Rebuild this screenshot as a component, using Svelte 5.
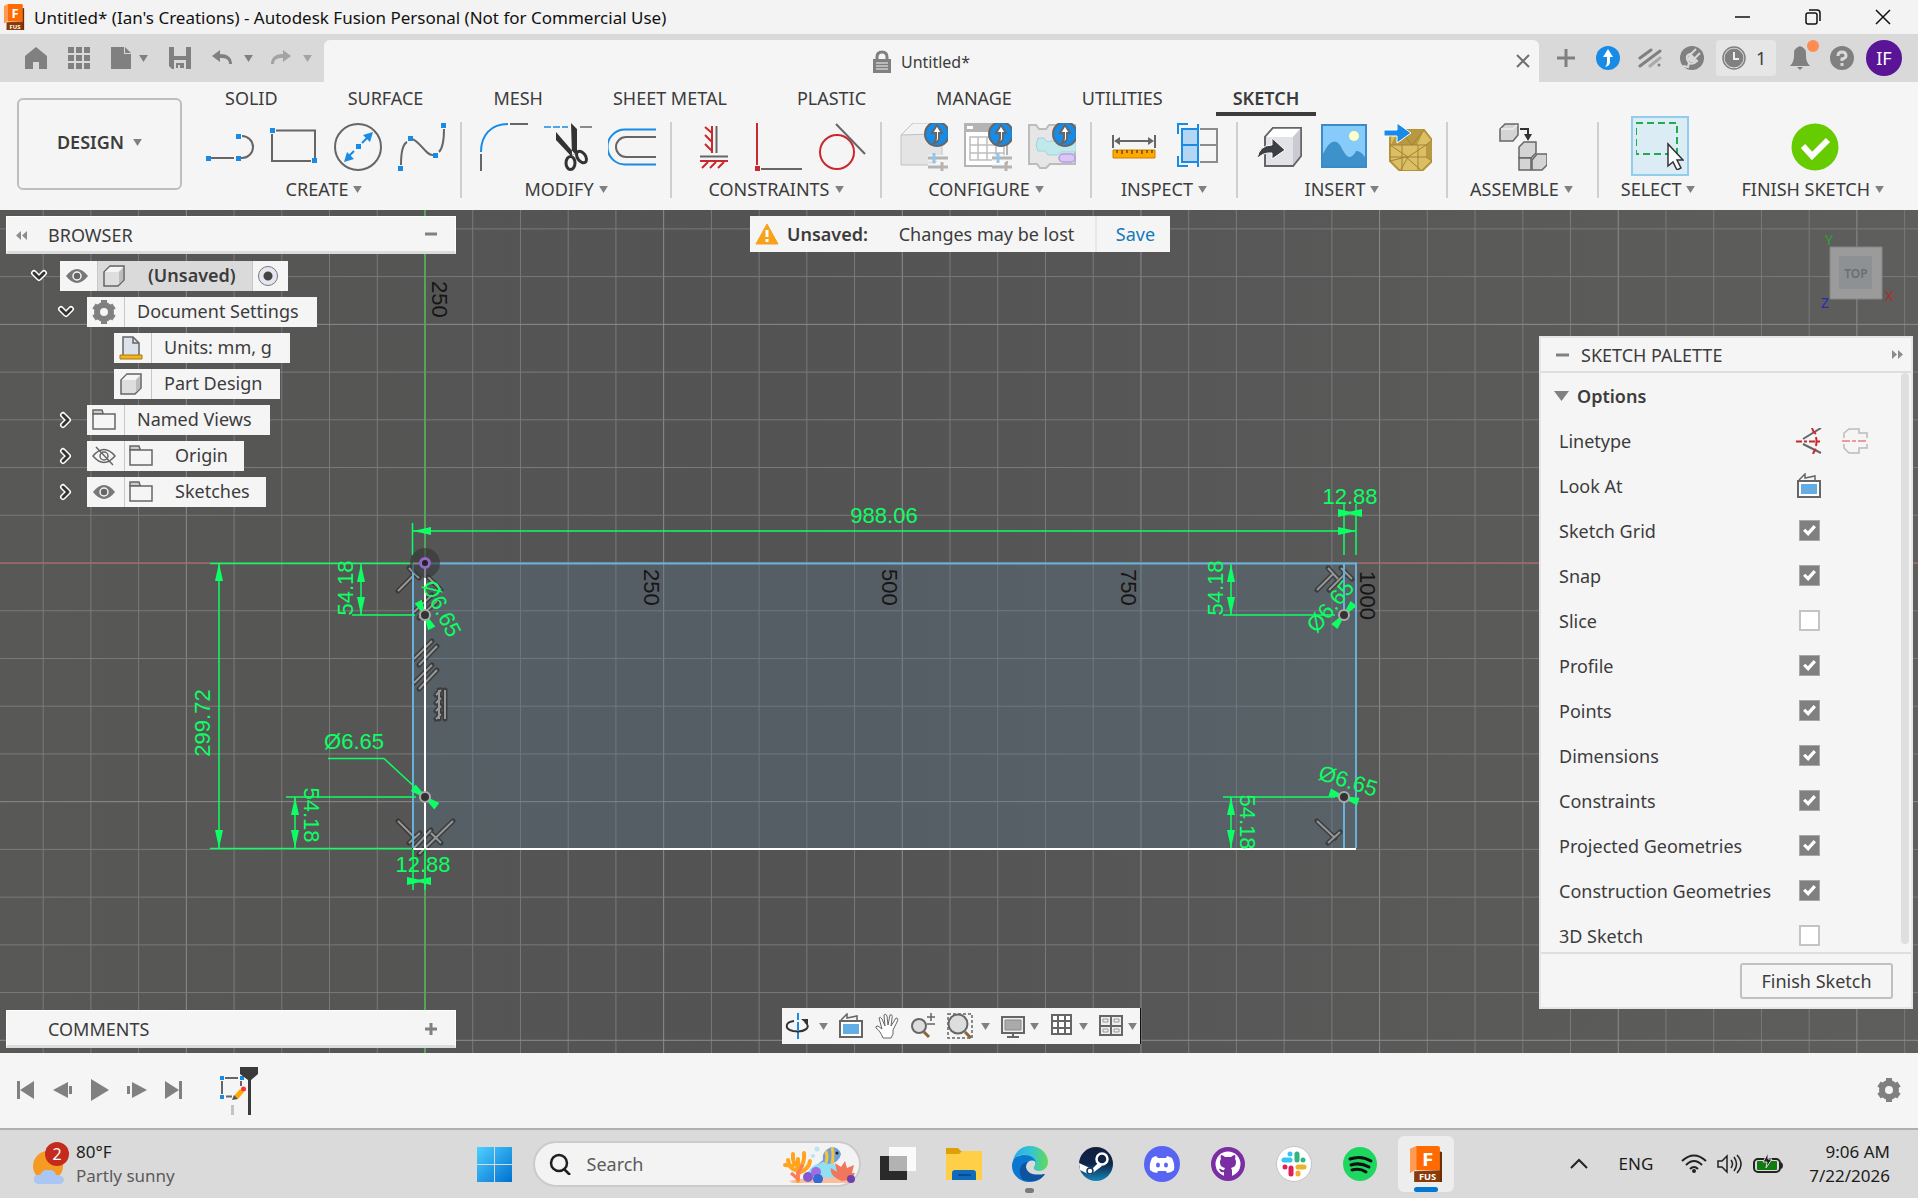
<script lang="ts">
    let search: string = "";

    let tabs: string[] = [
        "SOLID",
        "SURFACE",
        "MESH",
        "SHEET METAL",
        "PLASTIC",
        "MANAGE",
        "UTILITIES",
        "SKETCH",
    ];
    let activeTab: string = "SKETCH";

    let groups = [
        { label: "CREATE", tools: ["line", "rectangle", "circle", "spline"] },
        { label: "MODIFY", tools: ["fillet", "trim", "offset"] },
        { label: "CONSTRAINTS", tools: ["fix", "perpendicular", "tangent"] },
        { label: "CONFIGURE", tools: ["configure", "table", "theme"] },
        { label: "INSPECT", tools: ["measure", "section"] },
        { label: "INSERT", tools: ["derive", "image", "mesh"] },
        { label: "ASSEMBLE", tools: ["component"] },
        { label: "SELECT", tools: ["select"] },
        { label: "FINISH SKETCH", tools: ["finish"] },
    ];

    let tree = [
        { text: "(Unsaved)", level: 0, open: true, icons: ["eye", "body"], root: true },
        { text: "Document Settings", level: 1, open: true, icons: ["gear"] },
        { text: "Units: mm, g", level: 2, icons: ["units"] },
        { text: "Part Design", level: 2, icons: ["body"] },
        { text: "Named Views", level: 1, open: false, icons: ["folder"] },
        { text: "Origin", level: 1, open: false, icons: ["hidden", "folder"] },
        { text: "Sketches", level: 1, open: false, icons: ["eye", "folder"] },
    ];

    let options = [
        { text: "Sketch Grid", on: true },
        { text: "Snap", on: true },
        { text: "Slice", on: false },
        { text: "Profile", on: true },
        { text: "Points", on: true },
        { text: "Dimensions", on: true },
        { text: "Constraints", on: true },
        { text: "Projected Geometries", on: true },
        { text: "Construction Geometries", on: true },
        { text: "3D Sketch", on: false },
    ];

    let navTools = [
        { name: "orbit", menu: true, wide: true },
        { name: "lookat" },
        { name: "pan" },
        { name: "zoom" },
        { name: "fit", menu: true, wide: true },
        { name: "display", menu: true },
        { name: "grid", menu: true },
        { name: "viewports", menu: true },
    ];

    let apps: string[] = [
        "taskview",
        "explorer",
        "edge",
        "steam",
        "discord",
        "github",
        "slack",
        "spotify",
        "fusion",
    ];

    // sketch coordinates, measured from the origin point
    const step = 47.73;
    let columns = Array.from({ length: 42 }, (_, i) => i - 9);
    let lines = Array.from({ length: 19 }, (_, i) => i - 7);

    let holes = [
        { x: 0, y: 52, angle: 63 },
        { x: 0, y: 234, angle: 38 },
        { x: 919, y: 52, angle: -50 },
        { x: 919, y: 234, angle: 18 },
    ];

    let dims = [
        { x1: -12, y1: -32, x2: 931, y2: -32 },
        { x1: -206, y1: 0, x2: -206, y2: 285 },
        { x1: -64, y1: 1, x2: -64, y2: 52 },
        { x1: -130, y1: 234, x2: -130, y2: 285 },
        { x1: 806, y1: 1, x2: 806, y2: 52 },
        { x1: 806, y1: 234, x2: 806, y2: 285 },
        { x1: -12, y1: 318, x2: 0, y2: 318 },
        { x1: 919, y1: -50, x2: 931, y2: -50 },
    ];

    let dimTexts = [
        { text: "988.06", x: 459, y: -40, r: 0 },
        { text: "12.88", x: 925, y: -59, r: 0 },
        { text: "12.88", x: -2, y: 309, r: 0 },
        { text: "299.72", x: -215, y: 160, r: -90 },
        { text: "54.18", x: -72, y: 25, r: -90 },
        { text: "54.18", x: -121, y: 252, r: 90 },
        { text: "54.18", x: 798, y: 25, r: -90 },
        { text: "54.18", x: 815, y: 259, r: 90 },
        { text: "Ø6.65", x: -71, y: 186, r: 0 },
        { text: "Ø6.65", x: 10, y: 49, r: 63 },
        { text: "Ø6.65", x: 911, y: 48, r: -50 },
        { text: "Ø6.65", x: 921, y: 225, r: 17 },
    ];

    let rulers = [
        { text: "250", x: 7, y: -282 },
        { text: "250", x: 219, y: 6 },
        { text: "500", x: 457, y: 6 },
        { text: "750", x: 696, y: 6 },
        { text: "1000", x: 935, y: 8 },
    ];
</script>

{#snippet caret()}
    <svg class="caret" width="9" height="7" viewBox="0 0 10 8"><path d="M0 0H10L5 8Z" /></svg>
{/snippet}

{#snippet badge(x: number, y: number)}
    <circle cx={x} cy={y} r="12" fill="#178be6" />
    <path d="M{x} {y - 9}l5 8h-3v5q0 4-5 5 2-2 2-5v-5h-4z" fill="#fff" />
{/snippet}

{#snippet sliders(x: number)}
    <g stroke="#f5f5f5" stroke-width="6"><path d="M{x} 35h21M{x} 44h21" /></g>
    <g stroke="#b4b4b4" stroke-width="3"><path d="M{x} 35h21M{x} 44h21M{x + 14} 39v9" /></g>
    <path d="M{x + 6} 30v10" stroke="#8ec8f0" stroke-width="3" />
{/snippet}

{#snippet fusionMark()}
    <path d="M1 8V3L7 0V26L1 30Z" fill="#ff9a52" />
    <path d="M7 0H28Q30 0 30 2V27H7Z" fill="#ff6b00" />
    <path d="M30 6L32 7V40H5V28L30 27Z" fill="#8a3a06" />
    <path d="M30 6L32 7V40H30Z" fill="#6d2c02" />
    <text x="18" y="22" class="mark-f">F</text>
    <text x="18" y="38" class="mark-fus">FUS</text>
{/snippet}

{#snippet tool(name: string)}
    <svg class="tool-icon" width="48" height="48" viewBox="0 0 48 48" fill="none" stroke="#666" stroke-width="2">
        {#if name === "line"}
            <path d="M5 35H28M35 35H36A11 11 0 0 0 36 13H36" />
            <g class="pts"><path d="M0 33h5v5h-5zM30 33h5v5h-5zM30 11h5v5h-5z" /></g>
        {:else if name === "rectangle"}
            <path d="M6 7.500H45V35M41 38H2V11" />
            <g class="pts"><path d="M0 5h5v5h-5zM42 35h5v5h-5z" /></g>
        {:else if name === "circle"}
            <circle cx="24" cy="24" r="23" />
            <path d="M28 20L35 13M20 28L13 35" stroke="#178be6" />
            <g class="pts"><path d="M22 21h5v5h-5zM39 9l-3 10-7-7zM10 39l3-10 7 7z" /></g>
        {:else if name === "spline"}
            <path d="M3 42Q3 22 9 19M14 16C22 18 28 33 35 32M41 29Q46 24 46 6" />
            <g class="pts"><path d="M0 43h5v5h-5zM10 13h5v5h-5zM35 30h5v5h-5zM43 0h5v5h-5z" /></g>
        {:else if name === "fillet"}
            <path d="M1 48V31M30 1H48" />
            <path d="M1 29C1 12 11 1 28 1" stroke="#178be6" />
        {:else if name === "trim"}
            <path d="M0 4H24" stroke="#178be6" stroke-dasharray="7 2" stroke-width="1.500" />
            <path d="M36 4H48" stroke-width="1.500" />
            <path d="M27 0L33 6V30L28 32ZM12 9V17L27 33L31 31Z" fill="#333" stroke="none" />
            <ellipse cx="26.500" cy="40" rx="4.500" ry="6.500" stroke="#333" stroke-width="3" />
            <ellipse cx="37.500" cy="34" rx="4" ry="6.500" stroke="#333" stroke-width="3" transform="rotate(-35 37.500 34)" />
        {:else if name === "offset"}
            <path d="M48 6.500H17A17.500 17.500 0 0 0 17 41.500H48" stroke="#178be6" />
            <path d="M48 14H18A10 10 0 0 0 18 34H48" />
        {:else if name === "fix"}
            <path d="M26.500 3V30M10 33.500H38" />
            <path d="M22 3V30M10 38H38M22 10L15 4M22 19L15 12M22 28L15 21M18 39L12 45M26 39L20 45M34 39L28 45" stroke="#c9282d" />
        {:else if name === "perpendicular"}
            <path d="M3 0V42" stroke="#c9282d" />
            <path d="M1 43h5v5h-5z" fill="#c9282d" stroke="none" />
            <path d="M7 46H48" />
        {:else if name === "tangent"}
            <circle cx="19" cy="29" r="17" stroke="#c9282d" />
            <path d="M18 1L47 31" />
        {:else if name === "configure"}
            <path d="M1 12L13 0H42V32L33 42H1Z" fill="#e4e4e4" stroke="#c2c2c2" stroke-width="1" />
            <path d="M1 12L13 0H42L34 11Z" fill="#f3f3f3" stroke="#c2c2c2" stroke-width="1" />
            {@render sliders(28)}
            {@render badge(37, 11)}
        {:else if name === "table"}
            <path d="M1 1H43V43H1Z" fill="#fff" stroke="#b4b4b4" />
            <path d="M0 0H44V9H0Z" fill="#b4b4b4" stroke="none" />
            <path d="M3 3h6v3h-6z" fill="#fff" stroke="none" />
            <path d="M6 14H40V37H6ZM6 22H40M6 30H40M14 14V37M23 14V37M32 14V37" stroke="#bebebe" stroke-width="1.500" />
            {@render sliders(28)}
            {@render badge(37, 11)}
        {:else if name === "theme"}
            <path d="M1 2H8L11 6H18L21 2H47V41H22L18 45H12L9 41H1Z" fill="#e6e6e6" stroke="#bcbcbc" />
            <path d="M10 15H16Q18 20 23 18L48 17V29H33L29 32H20L17 28H10L8 22Z" fill="#c0e9ec" stroke="#a2d3d8" stroke-width="1" />
            <rect x="31" y="31" width="16" height="8" rx="4" fill="#d9c8f5" stroke="#b79ae0" stroke-width="1.500" />
            {@render badge(37, 11)}
        {:else if name === "measure"}
            <path d="M3 12V25M45 12V25M6 18H42" />
            <path d="M4 18l6-4v8zM44 18l-6-4v8z" fill="#666" stroke="none" />
            <path d="M3 27H45V35H3Z" fill="#ffa800" stroke="#c98200" stroke-width="1" />
            <path d="M7 27v3M12 27v4M17 27v3M22 27v4M27 27v3M32 27v4M37 27v3M42 27v3" stroke="#6b4a00" stroke-width="1.500" />
        {:else if name === "section"}
            <path d="M26 6H43V39H26M26 22H43" stroke="#8c8c8c" />
            <path d="M8 6H24V39H8Z" fill="#b3d7f3" stroke="#178be6" />
            <path d="M8 22H24M24 1V44M14 1H4V11M14 43H4V33" stroke="#178be6" />
        {:else if name === "derive"}
            <path d="M9 14L17 5H45V33L37 43H9Z" fill="#e2e3e6" stroke="#666" />
            <path d="M9 14L17 5H45L37 14Z" fill="#fff" stroke="none" />
            <path d="M45 5V33L37 43V14Z" fill="#c9cad3" stroke="none" />
            <path d="M9 14L17 5H45V33L37 43H9Z" stroke-width="1.500" />
            <path d="M1 36Q3 22 16 22V15L29 27L16 36V30Q7 29 1 36Z" fill="#3c3f44" stroke="#fff" stroke-width="1" />
        {:else if name === "image"}
            <path d="M2 2H46V44H2Z" fill="#86cbfa" stroke="#3b8cc6" />
            <path d="M3 31Q12 12 20 22Q26 34 29 34Q33 34 36 28Q40 27 45 34V43H3Z" fill="#3d92cb" stroke="none" />
            <circle cx="34" cy="13" r="5" fill="#ffffc8" stroke="none" />
        {:else if name === "mesh"}
            <path d="M6 14L14 7H40L48 17V38L38 48H16L6 38Z" fill="#dcbf62" stroke="#b4933c" />
            <path d="M14 7H40L33 22H7ZM42 22L48 17V38L42 34Z" fill="#b9993f" stroke="none" />
            <path d="M6 22H42L48 17M6 34H42L48 38M16 7L28 22L40 7M6 22L24 34L42 22M6 38L22 34L38 48M16 48L24 34M18 22V48M34 22V48" stroke="#a0823a" stroke-width="1" />
            <path d="M0 7H13V0L27 10L13 20V13H0Z" fill="#178be6" stroke="#fff" stroke-width="1" />
        {:else if name === "component"}
            <g fill="#d4d4d4" stroke-width="1.500">
                <path d="M1 6L6 1H19V12L14 18H1Z" /><path d="M2 6H14L18 2" stroke="#eee" />
                <path d="M20 24L25 19H37V30L32 35H20Z" /><path d="M20 35H32V47H20Z" />
                <path d="M33 37L38 31H48V42L43 47H33Z" />
            </g>
            <path d="M21 6H29V12" stroke="#333" />
            <path d="M25 11h8l-4 7z" fill="#333" stroke="none" />
        {:else if name === "select"}
            <path d="M0 1H41V32H0Z" stroke="#1fab4e" stroke-dasharray="7 4" />
            <path d="M32 22V44L37 40L41 48L45 46L41 38H47Z" fill="#fff" stroke="#333" stroke-width="1.500" />
        {:else if name === "finish"}
            <circle cx="24" cy="24" r="23.500" fill="#6c0" stroke="none" />
            <path d="M12 23L21 33L37 17" stroke="#fff" stroke-width="6" />
        {/if}
    </svg>
{/snippet}

{#snippet small(name: string)}
    <svg class="small-icon" width="26" height="26" viewBox="0 0 26 26" fill="none" stroke="#666" stroke-width="2">
        {#if name === "eye"}
            <path d="M2 13Q13-1 24 13Q13 27 2 13Z" fill="#777" stroke="none" />
            <circle cx="13" cy="13" r="4" fill="#666" stroke="#f5f5f5" stroke-width="1.500" />
        {:else if name === "hidden"}
            <path d="M2 13Q13 0 24 13Q13 26 2 13ZM5 4L22 22" stroke-width="1.500" />
            <circle cx="13" cy="13" r="4" stroke-width="1.500" />
        {:else if name === "body"}
            <path d="M3 9L9 3H23V17L17 23H3Z" fill="#dedede" stroke-width="1.500" />
            <path d="M4 9L9 4H22L17 9Z" fill="#f5f5f5" stroke="none" />
            <path d="M18 9L22 5V17L18 21Z" fill="#bdbdbd" stroke="none" />
        {:else if name === "gear"}
            <circle cx="13" cy="13" r="7" stroke="#808080" stroke-width="6" />
            <path d="M13 1V5M13 21V25M3 7L6 9M20 17L23 19M3 19L6 17M20 9L23 7" stroke="#808080" stroke-width="6" />
        {:else if name === "units"}
            <path d="M5 2H15L21 8V21H5Z" fill="#dde1ea" stroke-width="1.500" />
            <path d="M15 2V8H21" stroke-width="1.500" />
            <path d="M2 20H24V24H2Z" fill="#f2b31c" stroke="#a97a10" stroke-width="1" />
        {:else if name === "folder"}
            <path d="M2 3H11L12 6V7H2Z" fill="#ccc" stroke-width="1.500" />
            <path d="M2 7H24V22H2Z" fill="#f5f5f5" stroke-width="1.500" />
        {:else if name === "orbit"}
            <path d="M13 0V7M13 9V17M13 19V26" stroke="#178be6" />
            <path d="M9 8C0 9-1 16 8 18C20 20 27 14 20 9" stroke="#333" />
            <path d="M16 6h7v6z" fill="#333" stroke="none" />
        {:else if name === "lookat"}
            <path d="M2 8H24V24H2Z" fill="#fff" />
            <path d="M5 11H21V21H5Z" fill="#62ade4" stroke="none" />
            <path d="M3 7L9 1V5L19 3V7" stroke-width="1.500" />
        {:else if name === "pan"}
            <path d="M9 25C7 20 5 17 2 15Q1 13 4 13L8 16L5 5Q6 3 8 6L11 13L10 2Q12 0 13 3L14 12L16 2Q19 1 18 5L17 13L22 5Q25 5 23 9L19 17Q20 21 17 25Z" fill="#fff" stroke-width="1" />
        {:else if name === "zoom"}
            <circle cx="9" cy="13" r="7" fill="#ddd" />
            <path d="M14 19L19 24" stroke="#8a6537" stroke-width="3" />
            <path d="M17 4H25M21 0V8M17 11H25" stroke-width="1.500" />
        {:else if name === "fit"}
            <path d="M1 1H25V25H1Z" stroke-dasharray="3 2" stroke-width="1.500" />
            <circle cx="11" cy="11" r="9.500" fill="#ddd" />
            <path d="M18 19L24 25" stroke="#8a6537" stroke-width="3" />
        {:else if name === "display"}
            <path d="M2 4H24V20H2Z" fill="#eee" />
            <path d="M5 7H21V17H5Z" fill="#aaa" stroke="#888" stroke-width="1" />
            <path d="M13 20V24M7 24H19" />
        {:else if name === "grid"}
            <path d="M3 2H22V21H3ZM3 8H22M3 15H22M9 2V21M16 2V21" fill="#fff" />
        {:else if name === "viewports"}
            <path d="M2 3H24V22H2ZM2 13H24M13 3V22" fill="#eee" />
            <path d="M5 6h5v3h-5zM16 6h5v3h-5zM5 16h5v3h-5zM16 16h5v3h-5z" stroke="#999" stroke-width="1" />
        {:else if name === "linetype"}
            <path d="M7 11L25 0M7 16L25 25" stroke-width="2" />
            <path d="M0 13.500H26" stroke="#c9282d" stroke-dasharray="6 2 3 2" />
            <path d="M16 0Q17 4 20 6M20 9Q21 13 20 18M17 26Q18 23 20 21" stroke="#c9282d" />
        {:else if name === "centerline"}
            <path d="M2 10V5L7 1H17V5H25V10M2 16V20L7 25H17V20H25V16" stroke="#bbb" stroke-width="1.500" />
            <path d="M0 13H26" stroke="#ef9a9a" stroke-dasharray="8 2 4 2" />
        {/if}
    </svg>
{/snippet}

{#snippet app(name: string)}
    <svg width="36" height="36" viewBox="0 0 36 36">
        {#if name === "taskview"}
            <path d="M0 10H27V34H0Z" fill="#2a2a2a" />
            <path d="M9 1H36V25H9Z" fill="#fafafa" />
            <path d="M9 10H27V25H9Z" fill="#b2b2b2" />
        {:else if name === "explorer"}
            <path d="M0 2H12L15 5H36V12H0Z" fill="#dfa006" />
            <path d="M0 8H13L16 5H36V34H0Z" fill="#ffcf48" />
            <path d="M6 34V27Q6 24 9 24H27Q30 24 30 27V34Z" fill="#0f6cbd" />
            <path d="M12 29H25" stroke="#084c8c" stroke-width="2" />
        {:else if name === "edge"}
            <path d="M1 15C3 5 10 0 18 0C29 0 36 8 36 16C36 22 31 25 27 25C23 25 21 23 22 21C25 16 22 10 14 9C8 8 3 11 1 15Z" fill="url(#edge-top)" />
            <path d="M0 20C0 11 7 9 13 9C20 9 23 13 24 16C20 13 15 15 14 20C13 27 20 32 33 28C30 33 24 36 18 36C8 36 0 29 0 20Z" fill="#0a78d0" />
            <path d="M11 34C5 27 8 17 15 16C12 22 15 31 33 28C29 34 22 37 11 34Z" fill="#0f52a0" />
        {:else if name === "steam"}
            <circle cx="18" cy="18" r="17" fill="url(#steam-bg)" />
            <circle cx="24" cy="13" r="5.500" fill="none" stroke="#fff" stroke-width="2.500" />
            <path d="M1 17L14 23L20 17L24 20L16 26Q13 31 8 27L2 24Z" fill="#fff" />
            <circle cx="12" cy="25" r="3" fill="none" stroke="#14375f" stroke-width="1.500" />
        {:else if name === "discord"}
            <circle cx="18" cy="18" r="18" fill="#5865f2" />
            <path d="M12 10Q9 11 8 12Q5 18 6 24Q9 27 13 27L14 25H22L23 27Q27 27 30 24Q31 18 28 12Q26 11 23 10L22 12H14Z" fill="#fff" />
            <ellipse cx="14" cy="19" rx="2" ry="2.500" fill="#5865f2" />
            <ellipse cx="22" cy="19" rx="2" ry="2.500" fill="#5865f2" />
        {:else if name === "github"}
            <circle cx="18" cy="18" r="17" fill="#7b2da3" />
            <circle cx="18" cy="18" r="12.500" fill="#fff" />
            <path d="M14 31V26C11 27 10 25 9 23C11 22 12 25 14 24L15 22C11 21 10 19 10 16Q10 14 11 13Q10 11 11 9Q13 9 15 11H21Q23 9 25 9Q26 11 25 13Q26 14 26 16C26 19 25 21 21 22Q22 23 22 25V31Z" fill="#7b2da3" />
        {:else if name === "slack"}
            <circle cx="18" cy="18" r="17.500" fill="#fff" stroke="#c4c4c4" />
            <g stroke-width="5" stroke-linecap="round">
                <path d="M8 14H14M14 8V8" stroke="#36c5f0" /><path d="M21 8V14M27 14V14" stroke="#2eb67d" />
                <path d="M22 21H28M22 27V28" stroke="#ecb22e" /><path d="M15 22V28M9 21V21" stroke="#e01e5a" />
            </g>
        {:else if name === "spotify"}
            <circle cx="18" cy="18" r="17" fill="#1ed760" />
            <path d="M8 13Q19 9 29 15M9 19Q18 16 27 21M10 24Q18 22 24 26" fill="none" stroke="#111" stroke-width="3" stroke-linecap="round" />
        {/if}
    </svg>
{/snippet}

<svelte:head><title>Untitled*</title></svelte:head>

<div class="window">
    <header class="titlebar">
        <svg class="app-logo" width="22" height="26" viewBox="0 0 33 40">{@render fusionMark()}</svg>
        <span class="title">Untitled* (Ian's Creations) - Autodesk Fusion Personal (Not for Commercial Use)</span>
        <div class="window-buttons">
            <button aria-label="Minimize"><svg width="16" height="16"><path d="M0 8H15" /></svg></button>
            <button aria-label="Restore">
                <svg width="16" height="16"><rect x="1" y="4" width="11" height="11" rx="2" /><path d="M4 1H12Q15 1 15 4V12" /></svg>
            </button>
            <button aria-label="Close"><svg width="16" height="16"><path d="M1 1L15 15M15 1L1 15" /></svg></button>
        </div>
    </header>

    <div class="docbar">
        <div class="quick">
            <button aria-label="Home"><svg width="22" height="22"><path d="M11 0L22 9V22H14V15H8V22H0V9Z" /></svg></button>
            <button aria-label="Data panel">
                <svg width="22" height="22"><path d="M0 0h6v6H0zM8 0h6v6H8zM16 0h6v6h-6zM0 8h6v6H0zM8 8h6v6H8zM16 8h6v6h-6zM0 16h6v6H0zM8 16h6v6H8zM16 16h6v6h-6z" /></svg>
            </button>
            <button class="with-menu" aria-label="File"><svg width="20" height="22"><path d="M0 0H13V7H20V22H0ZM14 0L20 6H14Z" /></svg>{@render caret()}</button>
            <button aria-label="Save"><svg width="22" height="22"><path fill-rule="evenodd" d="M0 0H22V22H3L0 19ZM5 0V9H17V0ZM5 13V22H17V13ZM7 16H15V21H11V18H9V21H7Z" /></svg></button>
            <button class="with-menu undo" aria-label="Undo"><svg width="20" height="22"><path d="M0 9L8 3V7C15 7 20 10 20 17H17C17 12 14 11 8 11V15Z" /></svg>{@render caret()}</button>
            <button class="with-menu redo" aria-label="Redo"><svg width="20" height="22"><path d="M20 9L12 3V7C5 7 0 10 0 17H3C3 12 6 11 12 11V15Z" /></svg>{@render caret()}</button>
        </div>
        <div class="doctab">
            <svg width="18" height="24" viewBox="0 0 18 24"><path d="M4 11V7Q4 2 9 2T14 7V11" fill="none" stroke="#808080" stroke-width="3" /><path d="M0 9H18V23H0Z" fill="#808080" /><path d="M3 13H15M3 16H15M3 19H15" stroke="#f5f5f5" /></svg>
            <span>Untitled*</span>
            <button class="tab-close" aria-label="Close tab"><svg width="14" height="14"><path d="M1 1L13 13M13 1L1 13" stroke="#707070" stroke-width="2" /></svg></button>
        </div>
        <div class="account">
            <button aria-label="New tab"><svg width="24" height="18"><path d="M12 0V18M3 9H21" stroke="#808080" stroke-width="3" /></svg></button>
            <button aria-label="Upgrade"><svg width="24" height="24">{@render badge(12, 12)}</svg></button>
            <button aria-label="Extensions"><svg width="24" height="20" stroke="#808080" stroke-width="3" stroke-linecap="round"><path d="M2 10L13 2M2 18L22 3" /><path d="M12 18L22 10" stroke="#aaa" /><path d="M21 17V17" /></svg></button>
            <button aria-label="Status"><svg width="24" height="24"><circle cx="12" cy="12" r="12" fill="#808080" /><path d="M3 20L8 21L9 17Q4 10 10 8L13 12M11 8L16 3M15 12L20 7M10 8L17 15Q13 19 9 17" fill="none" stroke="#d9d9d9" stroke-width="2" /><path d="M10 9L16 15Q12 18 9 15T10 9Z" fill="#d9d9d9" /></svg></button>
            <button class="jobs"><svg width="24" height="24" fill="none" stroke="#808080"><circle cx="12" cy="12" r="11" stroke-width="1.500" /><circle cx="12" cy="12" r="9" fill="#808080" /><path d="M12 6V13H17" stroke="#eee" stroke-width="2" /></svg>1</button>
            <button class="bell" aria-label="Notifications"><svg width="24" height="24"><path d="M12 0Q19 2 18 10Q18 16 22 20H2Q6 16 6 10Q5 2 12 0ZM9 21H15L12 24Z" fill="#808080" /></svg><i></i></button>
            <button aria-label="Help"><svg width="24" height="24"><circle cx="12" cy="12" r="12" fill="#808080" /><path d="M8 10Q8 6 12 6T16 10Q16 12 12 13V15M12 17V20" fill="none" stroke="#d9d9d9" stroke-width="3" /></svg></button>
            <button class="avatar">IF</button>
        </div>
    </div>

    <section class="ribbon">
        <button class="workspace">DESIGN {@render caret()}</button>
        <div class="ribbon-body">
            <nav class="tabs">
                {#each tabs as tab}
                    <button class:active={tab === activeTab} on:click={() => (activeTab = tab)}>{tab}</button>
                {/each}
            </nav>
            <div class="groups">
                {#each groups as group}
                    <div class="group" class:single={group.tools.length === 1} class:last={group.label === "FINISH SKETCH"}>
                        <div class="tools">
                            {#each group.tools as name}
                                <button class="tool" class:picked={name === "select"} aria-label={name}>{@render tool(name)}</button>
                            {/each}
                        </div>
                        <button class="group-label">{group.label}{@render caret()}</button>
                    </div>
                {/each}
            </div>
        </div>
    </section>

    <main class="canvas">
        <svg class="drawing" width="100%" height="100%">
            <defs>
                <linearGradient id="backdrop">
                    <stop offset="0" stop-color="#585857" />
                    <stop offset="0.4" stop-color="#535353" />
                    <stop offset="1" stop-color="#5e5e5d" />
                </linearGradient>
                <linearGradient id="edge-top">
                    <stop offset="0" stop-color="#2aa9e8" />
                    <stop offset="0.5" stop-color="#33c3d8" />
                    <stop offset="1" stop-color="#62dc52" />
                </linearGradient>
                <linearGradient id="steam-bg" x2="0" y2="1">
                    <stop offset="0" stop-color="#111d3c" />
                    <stop offset="0.5" stop-color="#10254c" />
                    <stop offset="1" stop-color="#1387b8" />
                </linearGradient>
                <marker id="head" markerUnits="userSpaceOnUse" markerWidth="18" markerHeight="8" refX="18" refY="4" orient="auto-start-reverse">
                    <path d="M0 0L18 4L0 8Z" fill="#0cff63" />
                </marker>
            </defs>
            <rect width="100%" height="100%" fill="url(#backdrop)" />
            <g transform="translate(425 353)">
                {#each columns as i}
                    <line class="grid-line" class:major={i % 5 === 0} x1={i * step} x2={i * step} y1="-353" y2="1200" />
                {/each}
                {#each lines as i}
                    <line class="grid-line" class:major={i % 5 === 0} x1="-425" x2="3000" y1={i * step} y2={i * step} />
                {/each}
                <path class="axis-x" d="M-425 0.500H3000" />
                <path class="axis-y" d="M0 -353V1200" />
                <rect class="profile" x="-12" y="0" width="943" height="285" />

                {#each rulers as ruler}
                    <text class="ruler" transform="translate({ruler.x} {ruler.y}) rotate(90)">{ruler.text}</text>
                {/each}

                <g class="glyph-shadow">
                    <path id="glyphs" d="M-27 28L-12 13M-16 5L-6 15M3 14L16 27M-11 49L7 32M-6 55L12 38M-11 96L7 78M-6 102L12 83M-11 120L7 102M-6 126L12 107M-27 258L-10 275M-16 280L-5 270M-11 285L6 267M-6 291L28 258M6 270L16 280M892 27L908 11M903 5L913 16M904 27L920 11M916 5L927 16M892 258L910 275M903 280L915 269M14 127V156M20 127V156M11 132L16 127M11 140L16 135M11 148L16 143M11 156L16 151" />
                </g>
                <use href="#glyphs" class="glyph" />

                <path class="blue" d="M-12 0V285M-6 0.500H931V285M919 0V48M919 238V285" />
                <path class="white" d="M0 0V285M-12 286H931M-12 0.500H-4" />

                <path class="dim" d="M-12.500 -40V-8M931 -59V-8M919 -59V-8M-215 0.500H-12M-215 285.500H-13M-73 52H-10M-139 234H-9M798 52H910M798 234H910M-97 195.500H-41L-7 227M-12 286V327M0 286V327" />
                {#each dims as d}
                    <line class="dim" x1={d.x1} y1={d.y1} x2={d.x2} y2={d.y2} marker-start="url(#head)" marker-end="url(#head)" />
                {/each}
                {#each holes as hole}
                    <g transform="translate({hole.x} {hole.y}) rotate({hole.angle})">
                        <path class="wedge" d="M5 -2L15 -4V4L5 2ZM-5 -2L-15 -4V4L-5 2Z" />
                    </g>
                    <circle class="hole" cx={hole.x} cy={hole.y} r="5" />
                {/each}
                {#each dimTexts as d}
                    <text class="dim-text" transform="translate({d.x} {d.y}) rotate({d.r})">{d.text}</text>
                {/each}
                <circle r="15" fill="#333" opacity="0.6" />
                <circle r="4.500" fill="#222" stroke="#9168c8" stroke-width="3" />
            </g>
        </svg>

        <aside class="browser">
            <div class="panel-head">
                <svg width="12" height="9"><path d="M5 0V9L0 4.500ZM11 0V9L6 4.500Z" fill="#8c8c8c" /></svg>
                <h2>BROWSER</h2>
                <button aria-label="Collapse"><svg width="14" height="14"><path d="M1 6H13" stroke="#808080" stroke-width="3" /></svg></button>
            </div>
            <ul class="tree">
                {#each tree as row}
                    <li class="level{row.level}">
                        <button class="twisty" aria-label="Expand">
                            {#if row.open !== undefined}
                                <svg width="18" height="18" viewBox="-9 -9 18 18">
                                    <g transform="rotate({row.open ? 0 : -90})" fill="none" stroke-linecap="round" stroke-linejoin="round">
                                        <path d="M-5 -3L0 2L5 -3" stroke="#fff" stroke-width="6" />
                                        <path d="M-5 -3L0 2L5 -3" stroke="#333" stroke-width="3" />
                                    </g>
                                </svg>
                            {/if}
                        </button>
                        <div class="node" class:root={row.root}>
                            {#if row.icons.length === 2}
                                <button class="cell" aria-label="Visibility">{@render small(row.icons[0])}</button>
                                <span class="inner">{@render small(row.icons[1])}<span class="name">{row.text}</span></span>
                            {:else}
                                <span class="cell">{@render small(row.icons[0])}</span>
                                <span class="name">{row.text}</span>
                            {/if}
                            {#if row.root}
                                <input type="radio" checked aria-label="Activate" />
                            {/if}
                        </div>
                    </li>
                {/each}
            </ul>
        </aside>

        <div class="notice">
            <svg width="24" height="22" viewBox="0 0 24 22"><path d="M12 1L23 21H1Z" fill="#f9a11b" stroke="#f9a11b" stroke-width="1" /><path d="M12 7V14M12 16V19" stroke="#fff" stroke-width="3" /></svg>
            <b>Unsaved:</b>
            <span>Changes may be lost</span>
            <a href="#save">Save</a>
        </div>

        <div class="cube">
            <svg width="80" height="84">
                <text x="4" y="15" fill="#2fa32f">Y</text>
                <text x="0" y="78" fill="#2a2ab0">Z</text>
                <text x="64" y="71" fill="#b02a2a">X</text>
                <path d="M9 17H61V69H9Z" fill="#9b9b9b" stroke="#858585" />
                <path d="M18 26H51V59H18Z" fill="#8e9194" />
                <text x="35" y="48" class="face">TOP</text>
            </svg>
        </div>

        <aside class="palette">
            <div class="palette-head">
                <button aria-label="Collapse"><svg width="14" height="6"><path d="M0 3H13" stroke="#808080" stroke-width="3" /></svg></button>
                <h2>SKETCH PALETTE</h2>
                <svg width="12" height="9"><path d="M0 0V9L5 4.500ZM6 0V9L11 4.500Z" fill="#8c8c8c" /></svg>
            </div>
            <div class="palette-body">
                <h3><svg width="16" height="10"><path d="M0 0H15L7.500 10Z" fill="#808080" /></svg>Options</h3>
                <div class="option">
                    <span>Linetype</span>
                    <button aria-label="Construction">{@render small("linetype")}</button>
                    <button class="second" aria-label="Centerline">{@render small("centerline")}</button>
                </div>
                <div class="option">
                    <span>Look At</span>
                    <button aria-label="Look At">{@render small("lookat")}</button>
                </div>
                {#each options as option}
                    <label class="option">
                        <span>{option.text}</span>
                        <input type="checkbox" bind:checked={option.on} />
                    </label>
                {/each}
                <div class="scroll"></div>
            </div>
            <div class="palette-foot"><button>Finish Sketch</button></div>
        </aside>

        <div class="panel-head comments">
            <h2>COMMENTS</h2>
            <button aria-label="Add comment"><svg width="14" height="14"><path d="M1 7H13M7 1V13" stroke="#808080" stroke-width="3" /></svg></button>
        </div>

        <div class="navbar">
            {#each navTools as item}
                <button class:wide={item.wide} aria-label={item.name}>{@render small(item.name)}{#if item.menu}{@render caret()}{/if}</button>
            {/each}
        </div>
    </main>

    <section class="timeline">
        <div class="playback">
            <button aria-label="Start"><svg width="20" height="22"><path d="M1 2H4V20H1ZM18 2V20L4 11Z" /></svg></button>
            <button aria-label="Back"><svg width="20" height="22"><path d="M15 3V19L0 11ZM16 7H19V15H16Z" /></svg></button>
            <button aria-label="Play"><svg width="20" height="22"><path d="M1 0L19 11L1 22Z" /></svg></button>
            <button aria-label="Forward"><svg width="20" height="22"><path d="M5 3L20 11L5 19ZM0 7H3V15H0Z" /></svg></button>
            <button aria-label="End"><svg width="20" height="22"><path d="M1 2L15 11L1 20ZM15 2H18V20H15Z" /></svg></button>
        </div>
        <svg class="history" width="44" height="50" viewBox="0 0 44 50">
            <path d="M7 11H20M4 14V27M23 14V19M8 29.500H14" stroke="#666" stroke-width="2" />
            <path d="M2 9h4v4h-4zM22 9h4v4h-4zM2 28h4v4h-4z" fill="#178be6" />
            <path d="M16 29L22 22L26 25L20 32Z" fill="#ffa800" /><path d="M14 33L16 28L20 32Z" fill="#555" />
            <circle cx="25.500" cy="22" r="2.500" fill="#f33" />
            <path d="M13 38H16V48H13Z" fill="#c4c4c4" />
            <path d="M22 0H40V7L33 13V48H30V13L22 7Z" fill="#3a3a3a" />
        </svg>
        <button class="settings" aria-label="Timeline settings">{@render small("gear")}</button>
    </section>

    <footer class="taskbar">
        <button class="weather">
            <svg width="42" height="44" viewBox="0 0 42 44">
                <circle cx="18" cy="24" r="15" fill="#f59a23" />
                <path d="M8 42Q3 41 4 36Q5 32 10 33Q13 27 19 28Q25 28 26 33Q34 33 34 38Q33 42 29 42Z" fill="#a9c6f5" />
                <circle cx="27" cy="12" r="12" fill="#c42b1c" />
                <text x="27" y="18" text-anchor="middle" fill="#fff" font-size="16">2</text>
            </svg>
            <span>80°F<small>Partly sunny</small></span>
        </button>
        <div class="center">
            <button class="slot" aria-label="Start"><svg width="35" height="35"><path d="M0 0H17V17H0ZM18 0H35V17H18ZM0 18H17V35H0ZM18 18H35V35H18Z" fill="url(#win)" /><defs><linearGradient id="win" x2="1" y2="1"><stop offset="0" stop-color="#4fd0ff" /><stop offset="1" stop-color="#0070d0" /></linearGradient></defs></svg></button>
            <label class="search">
                <svg width="22" height="22" fill="none" stroke="#1f1f1f" stroke-width="2.500"><circle cx="10" cy="10" r="8" /><path d="M15 16L21 22" /></svg>
                <input type="text" placeholder="Search" bind:value={search} />
                <svg class="reef" width="74" height="38" viewBox="0 0 74 38">
                    <path d="M22 34Q26 18 44 17Q56 16 60 36H22Z" fill="#8fe0f5" />
                    <path d="M6 36Q40 29 68 35L64 38H10Z" fill="#f5bfa0" />
                    <path d="M15 36V14M15 26Q6 24 5 15M15 22Q9 18 10 9M16 28Q26 24 27 16M16 24Q22 18 21 8M9 21Q4 20 2 20" fill="none" stroke="#ffa41c" stroke-width="4" stroke-linecap="round" />
                    <path d="M15 36V28L20 20M15 34L8 28" stroke="#ff7a5c" stroke-width="3" fill="none" />
                    <circle cx="25" cy="32" r="5" fill="#8757d2" /><circle cx="33" cy="27" r="5" fill="#a06ce0" /><circle cx="35" cy="34" r="5" fill="#3569d4" />
                    <path d="M59 36Q46 31 48 23L54 27L52 18L58 22L62 16L64 23L71 20L69 28L72 28Q70 35 59 36Z" fill="#f2765c" />
                    <circle cx="68" cy="34" r="4" fill="#6f3fae" />
                    <path d="M34 20L40 15Q38 7 48 2Q56 2 58 9Q56 18 46 19L40 17Z" fill="#6fa0d8" />
                    <path d="M43 6Q45 12 43 18M49 2Q51 10 49 19" stroke="#f4c542" stroke-width="3" fill="none" />
                    <circle cx="54" cy="8" r="1.500" fill="#222" />
                    <circle cx="34" cy="4" r="2.500" fill="#b7e4f7" /><circle cx="30" cy="11" r="2" fill="#b7e4f7" />
                </svg>
            </label>
            {#each apps as name}
                <button class="slot {name}" aria-label={name}>
                    {#if name === "fusion"}
                        <svg width="34" height="36" viewBox="0 0 33 40" preserveAspectRatio="none">{@render fusionMark()}</svg>
                    {:else}
                        {@render app(name)}
                    {/if}
                </button>
            {/each}
        </div>
        <div class="tray">
            <button aria-label="Hidden icons"><svg width="18" height="12"><path d="M1 10L9 2L17 10" fill="none" stroke="#222" stroke-width="2" /></svg></button>
            <span class="lang">ENG</span>
            <div class="status">
                <svg width="26" height="20" fill="none" stroke="#222" stroke-width="2"><path d="M1 7Q13-4 25 7M5 11Q13 3 21 11M9 15Q13 11 17 15" /><circle cx="13" cy="17" r="2" fill="#222" stroke="none" /></svg>
                <svg width="26" height="20" fill="none" stroke="#222" stroke-width="1.500"><path d="M1 7H5L10 2V18L5 13H1ZM14 6Q17 10 14 14M17 3Q22 10 17 17M20 1Q28 10 20 19" /></svg>
                <svg width="30" height="22"><rect x="1" y="6" width="26" height="13" rx="4" fill="none" stroke="#222" stroke-width="2" /><rect x="4" y="8" width="20" height="9" rx="1" fill="#107c10" /><path d="M28 9V16Q30 15 30 12.500T28 9Z" fill="#222" /><path d="M15 0L10 9H14L13 15L19 6H15Z" fill="#222" stroke="#dadada" stroke-width="1" /></svg>
            </div>
            <div class="clock"><span>9:06 AM</span><span>7/22/2026</span></div>
        </div>
    </footer>
</div>

<style>
    :global(body) {
        margin: 0;
    }

    .window {
        display: flex;
        flex-direction: column;
        min-height: 100vh;
        font-family: "Noto Sans", "Open Sans", sans-serif;
        font-size: 18px;
        line-height: 24px;
        color: #3c3c3c;
        background: #f5f5f5;
    }

    button {
        display: flex;
        align-items: center;
        justify-content: center;
        padding: 0;
        border: 0;
        background: none;
        font: inherit;
        color: inherit;
    }

    svg {
        display: block;
        flex: none;
    }

    h2,
    h3 {
        margin: 0;
        font-size: 18px;
        font-weight: 400;
    }

    .caret {
        fill: #808080;
    }

    .mark-f {
        font: bold 20px "Noto Sans", sans-serif;
        fill: #fff;
        text-anchor: middle;
    }

    .mark-fus {
        font: bold 9px "Noto Sans", sans-serif;
        fill: #fff;
        text-anchor: middle;
    }

    /* title bar */
    .titlebar {
        display: flex;
        align-items: center;
        height: 34px;
        padding-left: 3px;
        background: #f3f3f3;
        color: #111;
    }

    .title {
        margin-left: 9px;
        padding-top: 2px;
        font-size: 17px;
    }

    .window-buttons {
        display: flex;
        margin-left: auto;
    }

    .window-buttons button {
        width: 70px;
        height: 34px;
    }

    .window-buttons svg {
        fill: none;
        stroke: #111;
        stroke-width: 1.5;
    }

    /* document bar */
    .docbar {
        display: flex;
        height: 48px;
        background: #d9d9d9;
    }

    .quick {
        display: flex;
        align-items: center;
        gap: 21px;
        box-sizing: border-box;
        width: 324px;
        padding-left: 25px;
    }

    .quick svg {
        fill: #808080;
    }

    .with-menu {
        gap: 8px;
    }

    .undo,
    .redo {
        gap: 12px;
    }

    .quick .redo {
        margin-left: -3px;
        opacity: 0.6;
    }

    .doctab {
        display: flex;
        flex: 1;
        align-items: center;
        justify-content: center;
        gap: 10px;
        position: relative;
        box-sizing: border-box;
        margin-top: 6px;
        padding: 2px 20px 0 0;
        border-radius: 6px 6px 0 0;
        background: #f5f5f5;
        font-size: 16px;
    }

    .tab-close {
        position: absolute;
        right: 9px;
        top: 14px;
    }

    .account {
        display: flex;
        align-items: center;
        gap: 18px;
        padding: 0 16px 0 15px;
    }

    .account .jobs {
        justify-content: flex-start;
        gap: 10px;
        box-sizing: border-box;
        width: 60px;
        height: 36px;
        margin: 0 -6px;
        padding-left: 6px;
        border-radius: 4px;
        background: #e6e6e6;
    }

    .bell {
        position: relative;
    }

    .bell i {
        position: absolute;
        right: -7px;
        top: -6px;
        width: 12px;
        height: 12px;
        border-radius: 6px;
        background: #ff8c50;
    }

    .avatar {
        width: 36px;
        height: 36px;
        margin-left: -6px;
        border-radius: 18px;
        background: #5a1496;
        color: #fff;
    }

    /* ribbon */
    .ribbon {
        display: flex;
        height: 128px;
        background: #f5f5f5;
    }

    .workspace {
        gap: 9px;
        width: 165px;
        height: 92px;
        margin: 16px 6px 0 17px;
        padding-bottom: 4px;
        border: 2px solid #bebebe;
        border-radius: 6px;
        box-sizing: border-box;
        font-weight: 600;
    }

    .ribbon-body {
        flex: 1;
        min-width: 0;
    }

    .tabs {
        display: flex;
        gap: 36px;
        height: 34px;
        padding-left: 20px;
    }

    .tabs button {
        padding: 2px 17px 0;
        border-bottom: 4px solid transparent;
        white-space: nowrap;
    }

    .tabs .active {
        border-color: #3c3c3c;
        font-weight: 600;
    }

    .groups {
        display: flex;
    }

    .group {
        display: flex;
        flex-direction: column;
        align-items: center;
        position: relative;
        padding: 0 8px 0 10px;
    }

    .group::after {
        content: "";
        position: absolute;
        right: 0;
        top: 6px;
        width: 2px;
        height: 76px;
        background: #cfcfcf;
    }

    .group.single {
        padding: 0 22px;
    }

    .group.single:nth-last-child(-n + 2)::after {
        display: none;
    }

    .group.last {
        margin-left: auto;
        padding: 0 34px 0 20px;
    }

    .tools {
        display: flex;
    }

    .tool {
        width: 64px;
        height: 61px;
    }

    .tool.picked {
        width: 58px;
        height: 60px;
        margin-bottom: 1px;
        box-sizing: border-box;
        border: 2px solid #92cdee;
        background: #dcecf5;
    }

    .pts {
        fill: #178be6;
        stroke: none;
    }

    .group-label {
        gap: 5px;
        margin-right: 4px;
        white-space: nowrap;
    }

    /* canvas */
    .canvas {
        display: flex;
        flex: 1;
        position: relative;
        min-height: 800px;
        overflow: hidden;
    }

    .drawing {
        position: absolute;
        inset: 0;
    }

    .grid-line {
        stroke: #7a7a7a;
        stroke-width: 1;
    }

    .grid-line.major {
        stroke: #8c8c8c;
    }

    .axis-x {
        stroke: #b55d59;
    }

    .axis-y {
        stroke: #54a656;
        stroke-width: 2;
    }

    .profile {
        fill: #5a7284;
        opacity: 0.35;
    }

    .blue,
    .white,
    .dim,
    .glyph {
        fill: none;
        stroke-width: 2;
    }

    .blue {
        stroke: #68b1da;
    }

    .white {
        stroke: #fff;
    }

    .dim {
        stroke: #0cff63;
        stroke-width: 1.5;
    }

    .wedge {
        fill: #0cff63;
    }

    .dim-text,
    .ruler {
        font-family: "Liberation Sans", Arial, sans-serif;
        font-size: 22px;
    }

    .dim-text {
        fill: #0cff63;
        text-anchor: middle;
    }

    .ruler {
        fill: #161616;
    }

    .glyph-shadow {
        fill: none;
        stroke: #333;
        stroke-width: 5;
        stroke-linecap: round;
        opacity: 0.8;
    }

    .glyph {
        stroke: #969696;
    }

    .hole {
        fill: #333;
        stroke: #aaa;
        stroke-width: 2;
    }

    .browser {
        position: absolute;
        left: 6px;
        top: 6px;
        width: 450px;
    }

    .panel-head {
        display: flex;
        align-items: center;
        box-sizing: border-box;
        height: 38px;
        padding: 2px 17px 0 9px;
        border: 1px solid #fff;
        border-bottom: 3px solid #dcdcdc;
        background: #f5f5f5;
    }

    .panel-head h2 {
        flex: 1;
        margin-left: 20px;
    }

    .tree {
        display: flex;
        flex-direction: column;
        gap: 6px;
        margin: 7px 0 0;
        padding: 0;
        list-style: none;
    }

    .tree li {
        display: flex;
        align-items: center;
        height: 30px;
    }

    .level0 {
        padding-left: 24px;
    }

    .level1 {
        padding-left: 51px;
    }

    .level2 {
        padding-left: 78px;
    }

    .twisty {
        width: 18px;
        height: 18px;
        margin-right: 12px;
    }

    .node,
    .inner {
        display: flex;
        align-items: center;
        height: 30px;
        background: #f5f5f5;
    }

    .cell {
        display: flex;
        align-items: center;
        justify-content: flex-start;
        box-sizing: border-box;
        width: 38px;
        height: 30px;
        padding-left: 4px;
        border-right: 1px solid #c8c8c8;
    }

    .inner {
        padding-left: 3px;
    }

    .name {
        padding: 0 18px 2px 12px;
        white-space: nowrap;
    }

    .inner .name {
        padding: 0 16px 2px 21px;
    }

    .root .inner {
        border-right: 1px solid #c8c8c8;
        background: #dadada;
        font-weight: 600;
    }

    .root input {
        appearance: none;
        width: 20px;
        height: 20px;
        margin: 0 10px 0 5px;
        border: 1px solid #777;
        border-radius: 11px;
        background: radial-gradient(#444 0 4px, #e4e7f0 5px);
    }

    .notice {
        display: flex;
        align-items: center;
        position: absolute;
        left: 50%;
        top: 6px;
        width: 420px;
        height: 36px;
        margin-left: -209px;
        background: #f5f5f5;
        white-space: nowrap;
    }

    .notice svg {
        margin: 0 8px 0 5px;
    }

    .notice b {
        font-weight: 600;
    }

    .notice span {
        flex: 1;
        padding-left: 10px;
        text-align: center;
    }

    .notice a {
        width: 75px;
        box-sizing: border-box;
        padding-left: 4px;
        border-left: 2px solid #e8e8e8;
        color: #1479b8;
        line-height: 36px;
        text-align: center;
        text-decoration: none;
    }

    .cube {
        position: absolute;
        right: 17px;
        top: 20px;
        font-size: 14px;
    }

    .face {
        font-size: 12px;
        font-weight: 600;
        fill: #6a6e72;
        text-anchor: middle;
    }

    .palette {
        position: absolute;
        right: 5px;
        top: 126px;
        box-sizing: border-box;
        width: 374px;
        border: 2px solid #e6e6e6;
        background: #f5f5f5;
    }

    .palette-head {
        display: flex;
        align-items: center;
        height: 33px;
        padding: 0 7px 0 15px;
        border-bottom: 2px solid #dedede;
    }

    .palette-head h2 {
        flex: 1;
        margin-left: 11px;
    }

    .palette-body {
        position: relative;
        height: 579px;
        overflow: hidden;
        padding: 0 18px;
        border-bottom: 2px solid #dedede;
    }

    h3 {
        display: flex;
        align-items: center;
        gap: 7px;
        height: 45px;
        margin-left: -5px;
        font-weight: 600;
    }

    .option {
        display: flex;
        align-items: center;
        position: relative;
        height: 45px;
    }

    .option span {
        width: 237px;
    }

    .option .second {
        margin-left: 20px;
    }

    .option input {
        appearance: none;
        position: relative;
        box-sizing: border-box;
        width: 21px;
        height: 21px;
        margin: 0 3px;
        border: 2px solid #c4c4c4;
        background: #fff;
    }

    .option input:checked {
        border: 1px solid #a8a8a8;
        background: #808080;
    }

    .option input:checked::after {
        content: "";
        position: absolute;
        inset: 4px 3px 4px 3px;
        background: #fff;
        clip-path: polygon(0 52%, 18% 34%, 38% 56%, 82% 0, 100% 20%, 40% 100%);
    }

    .scroll {
        position: absolute;
        right: 2px;
        top: 0;
        bottom: 8px;
        width: 8px;
        border-radius: 4px;
        background: #dfdfdf;
    }

    .palette-foot {
        display: flex;
        justify-content: flex-end;
        padding: 9px 18px 8px;
    }

    .palette-foot button {
        box-sizing: border-box;
        width: 153px;
        height: 36px;
        border: 2px solid #c0c0c0;
        border-radius: 3px;
    }

    .comments {
        position: absolute;
        left: 6px;
        bottom: 5px;
        width: 450px;
    }

    .comments h2 {
        margin-left: 32px;
    }

    .navbar {
        display: flex;
        align-items: center;
        justify-content: space-between;
        position: absolute;
        left: 50%;
        bottom: 9px;
        box-sizing: border-box;
        width: 359px;
        height: 36px;
        margin-left: -177px;
        padding: 0 3px;
        border-right: 1px solid #111;
        background: #f5f5f5;
    }

    .navbar button {
        gap: 4px;
    }

    .navbar .wide {
        gap: 8px;
    }

    /* timeline */
    .timeline {
        display: flex;
        align-items: center;
        height: 75px;
        border-bottom: 2px solid #b0b0b0;
        background: #f5f5f5;
    }

    .playback {
        display: flex;
        gap: 17px;
        margin: 0 34px 2px 16px;
        fill: #808080;
    }

    .history {
        margin-top: 2px;
    }

    .settings {
        margin: 0 16px 2px auto;
    }

    /* taskbar */
    .taskbar {
        display: grid;
        grid-template-columns: 1fr auto 1fr;
        align-items: center;
        height: 68px;
        background: #dadada;
        color: #1c1c1c;
        font-size: 17px;
    }

    .weather {
        justify-self: start;
        gap: 4px;
        margin-left: 30px;
        text-align: left;
    }

    .weather small {
        display: block;
        color: #5a5a5a;
        font-size: 17px;
    }

    .center {
        display: flex;
        align-items: center;
        padding-left: 2px;
    }

    .slot {
        width: 66px;
        height: 56px;
    }

    .search {
        display: flex;
        align-items: center;
        box-sizing: border-box;
        width: 328px;
        height: 46px;
        margin: 0 4px 0 5px;
        padding: 0 2px 0 14px;
        border: 2px solid #cbcbcb;
        border-radius: 23px;
        background: #f3f3f3;
    }

    .search input {
        flex: 1;
        min-width: 0;
        margin-left: 16px;
        padding: 0;
        border: 0;
        outline: 0;
        background: none;
        font: inherit;
        font-size: 18px;
        color: #222;
    }

    .search input::placeholder {
        color: #5c5c5c;
        opacity: 1;
    }

    .edge {
        position: relative;
    }

    .edge::after,
    .fusion::after {
        content: "";
        position: absolute;
        bottom: -1px;
        width: 9px;
        height: 5px;
        border-radius: 3px;
        background: #7a7a7a;
    }

    .fusion {
        position: relative;
        width: 56px;
        margin: 0 5px;
        border-radius: 6px;
        background: #ededed;
    }

    .fusion::after {
        bottom: 0;
        width: 24px;
        background: #0078d4;
    }

    .tray {
        display: flex;
        align-items: center;
        justify-content: flex-end;
        padding-right: 28px;
    }

    .lang {
        margin: 0 28px 0 31px;
    }

    .status {
        display: flex;
        align-items: center;
        gap: 10px;
    }

    .clock {
        display: flex;
        flex-direction: column;
        margin-left: 26px;
        text-align: right;
    }
</style>
